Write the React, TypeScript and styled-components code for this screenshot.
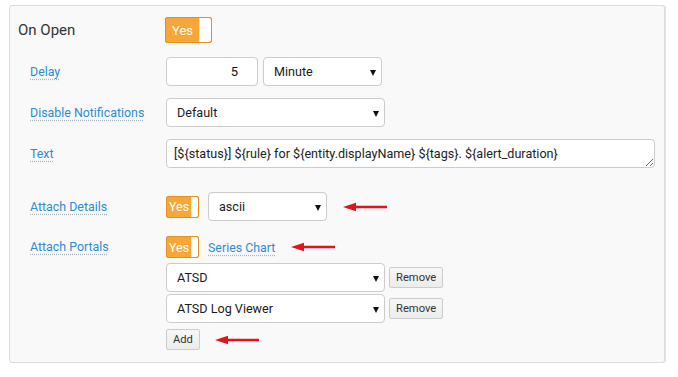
import React from 'react';
import styled, { createGlobalStyle } from 'styled-components';

const GlobalStyle = createGlobalStyle`
  body {
    margin: 0;
    background: #fff;
    font-family: Roboto, 'Liberation Sans', sans-serif;
  }
`;

const ORANGE = '#f8a638';
const ORANGE_BORDER = '#e2901f';
const LINK = '#2b8dd3';

const Panel = styled.div`
  box-sizing: border-box;
  margin: 5px 0 0 9px;
  width: 656px;
  height: 358px;
  padding: 11px 0 0 8px;
  background: #f9f9f9;
  border: 1px solid #dcdcdc;
  border-radius: 3px;
  box-shadow: 1px 0 0 #e4e4e4;
`;

const Header = styled.div`
  display: grid;
  grid-template-columns: 147px auto;
  align-items: center;
  height: 26px;
`;

const Title = styled.div`
  font-size: 15px;
  color: #333;
`;

const Fields = styled.div`
  margin-left: 12px;
`;

const Row = styled.div<{ $top: number; $align?: string }>`
  display: grid;
  grid-template-columns: 136px auto;
  align-items: ${(p) => p.$align || 'center'};
  margin-top: ${(p) => p.$top}px;
`;

const Label = styled.span<{ $lh?: number }>`
  justify-self: start;
  font-size: 12.4px;
  color: ${LINK};
  line-height: ${(p) => (p.$lh ? `${p.$lh}px` : '15px')};
  text-decoration: underline dotted #a9b4be;
  text-underline-offset: 3px;
  cursor: help;
`;

const Controls = styled.div<{ $gap?: number }>`
  display: flex;
  align-items: center;
  gap: ${(p) => p.$gap ?? 5}px;
`;

const Stack = styled.div`
  display: flex;
  flex-direction: column;
  align-items: flex-start;
`;

const Switch = styled.div<{ $big?: boolean }>`
  box-sizing: border-box;
  display: flex;
  width: ${(p) => (p.$big ? 47 : 33)}px;
  height: ${(p) => (p.$big ? 26 : 22)}px;
  background: ${ORANGE};
  border: 1px solid ${ORANGE_BORDER};
  border-radius: 2px;
  overflow: hidden;
  flex-shrink: 0;
`;

const SwitchText = styled.span<{ $big?: boolean }>`
  flex: 1;
  display: flex;
  align-items: center;
  justify-content: center;
  color: #fff;
  font-size: ${(p) => (p.$big ? 13 : 12.5)}px;
`;

const Knob = styled.span<{ $big?: boolean }>`
  width: ${(p) => (p.$big ? 11 : 6)}px;
  background: #fff;
  border-left: 1px solid #e6e6e6;
  border-radius: 0 2px 2px 0;
`;

const TextInput = styled.input`
  box-sizing: border-box;
  width: 92px;
  height: 29px;
  padding: 0 19px 0 8px;
  border: 1px solid #ccc;
  border-radius: 4px;
  background: #fff;
  text-align: right;
  font: 13px Roboto, 'Liberation Sans', sans-serif;
  color: #111;
  outline: none;
`;

const SelectBox = styled.div<{ $w: number }>`
  position: relative;
  width: ${(p) => p.$w}px;
  flex-shrink: 0;

  &::after {
    content: '';
    position: absolute;
    right: 6px;
    top: 50%;
    margin-top: -2px;
    border-left: 3.5px solid transparent;
    border-right: 3.5px solid transparent;
    border-top: 6px solid #111;
    pointer-events: none;
  }
`;

const Select = styled.select`
  box-sizing: border-box;
  width: 100%;
  height: 29px;
  padding: 0 20px 0 10px;
  appearance: none;
  border: 1px solid #ccc;
  border-radius: 4px;
  background: #fff;
  font: 12.6px Roboto, 'Liberation Sans', sans-serif;
  color: #1a1a1a;
  outline: none;
`;

const TextArea = styled.textarea`
  box-sizing: border-box;
  display: block;
  width: 489px;
  height: 29px;
  padding: 6px 7px;
  border: 1px solid #ccc;
  border-radius: 4px;
  background: #fff;
  font: 12.6px Roboto, 'Liberation Sans', sans-serif;
  color: #222;
  resize: vertical;
  overflow: hidden;
  white-space: nowrap;
  outline: none;
`;

const Button = styled.button`
  box-sizing: border-box;
  height: 21px;
  padding: 0 6px;
  border: 1px solid #ccc;
  border-radius: 2px;
  background: linear-gradient(#f7f7f7, #ececec);
  font: 11.2px Roboto, 'Liberation Sans', sans-serif;
  color: #333;
`;

const PortalRow = styled.div<{ $top: number }>`
  display: flex;
  align-items: center;
  gap: 4px;
  margin-top: ${(p) => p.$top}px;
`;

const AddRow = styled.div`
  display: flex;
  align-items: center;
  gap: 15px;
  margin-top: 6px;
`;

const Link = styled.a`
  font-size: 12.4px;
  color: ${LINK};
  text-decoration: underline dotted #a9b4be;
  text-underline-offset: 3px;
  cursor: pointer;
`;

const ArrowWrap = styled.span<{ $ml: number }>`
  display: inline-flex;
  margin-left: ${(p) => p.$ml}px;
`;

const Arrow = ({ ml }: { ml: number }) => (
  <ArrowWrap $ml={ml}>
    <svg width="44" height="10" viewBox="0 0 44 10">
      <line x1="10" y1="5" x2="44" y2="5" stroke="#e4121b" strokeWidth="2.6" />
      <polygon points="0,5 13,0.8 13,9.2" fill="#e4121b" />
    </svg>
  </ArrowWrap>
);

const Toggle = ({ big }: { big?: boolean }) => (
  <Switch $big={big}>
    <SwitchText $big={big}>Yes</SwitchText>
    <Knob $big={big} />
  </Switch>
);

const portals = ['ATSD', 'ATSD Log Viewer'];

export default function App() {
  return (
    <>
      <GlobalStyle />
      <Panel>
        <Header>
          <Title>On Open</Title>
          <Toggle big />
        </Header>
        <Fields>
          <Row $top={14}>
            <Label>Delay</Label>
            <Controls>
              <TextInput defaultValue="5" />
              <SelectBox $w={119}>
                <Select defaultValue="Minute">
                  <option>Minute</option>
                </Select>
              </SelectBox>
            </Controls>
          </Row>
          <Row $top={12}>
            <Label>Disable Notifications</Label>
            <Controls>
              <SelectBox $w={219}>
                <Select defaultValue="Default">
                  <option>Default</option>
                </Select>
              </SelectBox>
            </Controls>
          </Row>
          <Row $top={12}>
            <Label>Text</Label>
            <TextArea
              rows={1}
              defaultValue="[${status}] ${rule} for ${entity.displayName} ${tags}. ${alert_duration}"
            />
          </Row>
          <Row $top={24}>
            <Label>Attach Details</Label>
            <Controls $gap={9}>
              <Toggle />
              <SelectBox $w={119}>
                <Select defaultValue="ascii">
                  <option>ascii</option>
                </Select>
              </SelectBox>
              <Arrow ml={7} />
            </Controls>
          </Row>
          <Row $top={15} $align="start">
            <Label $lh={22}>Attach Portals</Label>
            <Stack>
              <Controls $gap={9}>
                <Toggle />
                <Link>Series Chart</Link>
                <Arrow ml={7} />
              </Controls>
              {portals.map((name, i) => (
                <PortalRow key={name} $top={i === 0 ? 5 : 2}>
                  <SelectBox $w={219}>
                    <Select defaultValue={name}>
                      <option>{name}</option>
                    </Select>
                  </SelectBox>
                  <Button>Remove</Button>
                </PortalRow>
              ))}
              <AddRow>
                <Button>Add</Button>
                <Arrow ml={0} />
              </AddRow>
            </Stack>
          </Row>
        </Fields>
      </Panel>
    </>
  );
}
